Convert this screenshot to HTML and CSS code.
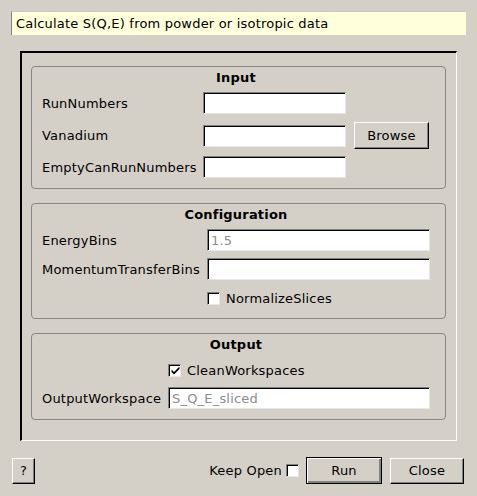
FILE: index.html
```html
<!DOCTYPE html>
<html>
<head>
<meta charset="utf-8">
<link rel="stylesheet" href="styles.css">
</head>
<body>
<div class="banner">Calculate S(Q,E) from powder or isotropic data</div>
<div class="frame">
  <div class="group group-input">
    <div class="title">Input</div>
    <div class="rows">
      <div class="row"><span class="label">RunNumbers</span><span class="field"></span></div>
      <div class="row row-tall"><span class="label">Vanadium</span><span class="field"></span><span class="btn btn-browse">Browse</span></div>
      <div class="row"><span class="label">EmptyCanRunNumbers</span><span class="field"></span></div>
    </div>
  </div>
  <div class="group group-config">
    <div class="title">Configuration</div>
    <div class="rows">
      <div class="row"><span class="label">EnergyBins</span><span class="field field-wide"><span class="ph">1.5</span></span></div>
      <div class="row"><span class="label">MomentumTransferBins</span><span class="field field-wide"></span></div>
      <div class="row"><span class="label"></span><span class="check"></span><span class="check-text">NormalizeSlices</span></div>
    </div>
  </div>
  <div class="group group-output">
    <div class="title">Output</div>
    <div class="rows">
      <div class="row"><span class="label"></span><span class="check checked"><svg width="9" height="9" viewBox="0 0 9 9"><path d="M0.5 3.5 L3 6 L8.5 0.5 L8.5 3 L3 8.5 L0.5 6 Z" fill="#000"/></svg></span><span class="check-text">CleanWorkspaces</span></div>
      <div class="row"><span class="label">OutputWorkspace</span><span class="field field-wide"><span class="ph">S_Q_E_sliced</span></span></div>
    </div>
  </div>
</div>
<div class="bottom">
  <span class="btn btn-help">?</span>
  <span class="spacer"></span>
  <span class="keep">Keep Open</span>
  <span class="check check-keep"></span>
  <span class="btn btn-run">Run</span>
  <span class="btn btn-close">Close</span>
</div>
</body>
</html>
```

FILE: styles.css
```css
* { box-sizing: border-box; }
html, body { margin: 0; padding: 0; }
body {
  width: 477px;
  height: 496px;
  background: #d4d0c8;
  font-family: "DejaVu Sans", sans-serif;
  font-size: 13px;
  letter-spacing: 0.2px;
  color: #000;
  overflow: hidden;
}
.banner {
  margin: 11px 11px 0 11px;
  height: 24px;
  background: #ffffdc;
  border-top: 1px solid #c8c8c8;
  border-left: 1px solid #808080;
  padding: 3px 0 0 4px;
  line-height: 17px;
  white-space: nowrap;
}
.frame {
  margin: 16px 0 0 20px;
  width: 437px;
  height: 390px;
  border-top: 2px solid #000;
  border-left: 2px solid #000;
  border-right: 1px solid #fff;
  border-bottom: 1px solid #fff;
  padding: 13px 10px 0 9px;
  display: flex;
  flex-direction: column;
  gap: 14px;
}
.group {
  border: 1px solid #868686;
  border-radius: 4px;
  padding: 3px 15px 0 10px;
}
.group-input { height: 123px; }
.group-config { height: 116px; }
.group-output { height: 87px; }
.title {
  font-weight: bold;
  text-align: center;
  line-height: 16px;
  height: 16px;
}
.rows {
  margin-top: 6px;
  display: flex;
  flex-direction: column;
  gap: 7px;
}
.group-input .rows { gap: 8px; margin-top: 6px; }
.group-input .row-tall { height: 27px; margin-bottom: -1px; }
.row {
  display: flex;
  align-items: center;
  height: 22px;
  white-space: nowrap;
}
.group-input .label { width: 161px; }
.group-config .label { width: 165px; }
.group-output .label { width: 126px; }
.group-output .rows { gap: 6px; }
.field {
  display: block;
  height: 22px;
  width: 143px;
  background: #fff;
  border-top: 1px solid #808080;
  border-left: 1px solid #808080;
  border-right: 1px solid #e8e6e2;
  border-bottom: 1px solid #e8e6e2;
  box-shadow: inset 1px 1px 0 #000;
  padding: 2px 0 0 3px;
  line-height: 17px;
}
.field-wide { flex: 1; width: auto; }
.ph { color: #8c8c8c; }
.btn {
  display: flex;
  align-items: center;
  justify-content: center;
  background: #d4d0c8;
  border-top: 1px solid #fff;
  border-left: 1px solid #fff;
  border-right: 1px solid #000;
  border-bottom: 1px solid #000;
  box-shadow: inset -1px -1px 0 #808080;
  line-height: 16px;
}
.btn-browse {
  margin-left: 8px;
  width: 75px;
  height: 27px;
}
.check {
  display: flex;
  align-items: center;
  justify-content: center;
  width: 13px;
  height: 13px;
  background: #fff;
  border-top: 1px solid #808080;
  border-left: 1px solid #808080;
  border-right: 1px solid #e8e6e2;
  border-bottom: 1px solid #e8e6e2;
  box-shadow: inset 1px 1px 0 #000;
}
.check svg { margin: 1px 0 0 1px; }
.check-text { margin-left: 6px; }
.bottom {
  display: flex;
  align-items: center;
  margin-top: 16px;
  padding: 0 13px 0 12px;
  height: 27px;
}
.spacer { flex: 1; }
.btn-help { width: 23px; height: 26px; }
.keep { margin-right: 4px; }
.btn-run {
  margin-left: 7px;
  width: 76px;
  height: 27px;
  border: 1px solid #000;
  box-shadow: inset 1px 1px 0 #fff, inset -2px -2px 0 #808080, inset -1px -1px 0 #000;
}
.btn-close {
  margin-left: 8px;
  width: 74px;
  height: 26px;
}
```
